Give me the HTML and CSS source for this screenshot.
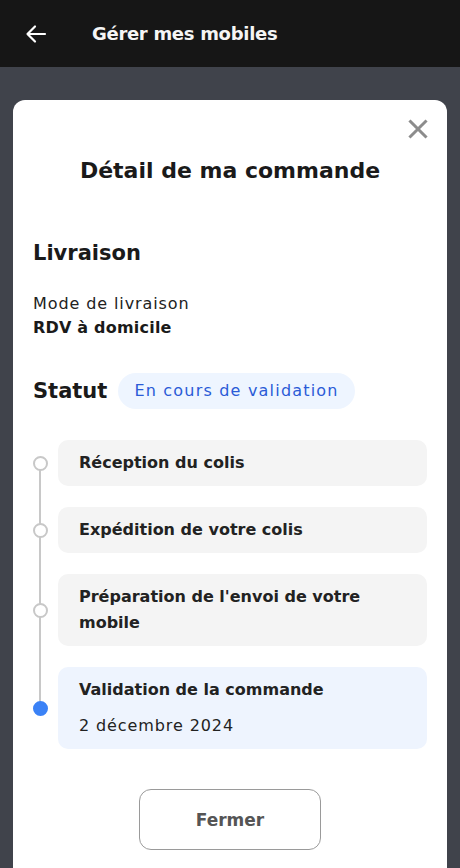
FILE: index.html
```html
<!DOCTYPE html>
<html lang="fr">
<head>
<meta charset="UTF-8" />
<meta name="viewport" content="width=device-width, initial-scale=1" />
<title>Gérer mes mobiles</title>
<link rel="stylesheet" href="styles.css">
</head>
<body>

<header class="topbar">
  <svg class="back" width="22" height="22" viewBox="0 0 22 22" fill="none" stroke="#fff" stroke-width="2.2" stroke-linecap="round" stroke-linejoin="round">
    <path d="M20 11H2.5M10 3.5L2.5 11l7.5 7.5"/>
  </svg>
  <div class="topbar-title">Gérer mes mobiles</div>
</header>

<main class="overlay">
  <div class="modal">
    <button class="close" title="Fermer">
      <svg width="20" height="20" viewBox="0 0 20 20" stroke="#8c8c8c" stroke-width="3" stroke-linecap="square">
        <path d="M2.5 2.5l15 15M17.5 2.5l-15 15"/>
      </svg>
    </button>

    <h1 class="modal-title">Détail de ma commande</h1>

    <h2 class="section-title">Livraison</h2>
    <div class="label">Mode de livraison</div>
    <div class="value">RDV à domicile</div>

    <div class="status-row">
      <h2 class="section-title">Statut</h2>
      <span class="pill">En cours de validation</span>
    </div>

    <div class="timeline">
      <div class="step">
        <span class="dot"></span>
        <div class="step-card">Réception du colis</div>
      </div>
      <div class="step">
        <span class="dot"></span>
        <div class="step-card">Expédition de votre colis</div>
      </div>
      <div class="step">
        <span class="dot"></span>
        <div class="step-card">Préparation de l'envoi de votre mobile</div>
      </div>
      <div class="step current">
        <span class="dot"></span>
        <div class="step-card">
          Validation de la commande
          <div class="step-date">2 décembre 2024</div>
        </div>
      </div>
    </div>

    <div class="actions">
      <button class="btn-close">Fermer</button>
    </div>
  </div>
</main>

</body>
</html>
```

FILE: styles.css
```css
* {
  box-sizing: border-box;
}
body, html {
  margin: 0; padding: 0;
  height: 100%;
  background: #40434b;
  font-family: 'DejaVu Sans', 'Open Sans', sans-serif;
  color: #1a1a1a;
  overflow: hidden;
}
.topbar {
  height: 67px;
  background: #161616;
  display: flex;
  align-items: center;
  padding-left: 25px;
}
.back {
  display: block;
}
.topbar-title {
  margin-left: 45px;
  color: #f5f5f5;
  font-size: 18px;
  font-weight: 700;
  letter-spacing: -0.3px;
}
.overlay {
  padding: 33px 13px 0;
}
.modal {
  position: relative;
  background: #fff;
  border-radius: 12px 12px 0 0;
  padding: 56px 20px 40px;
  min-height: 800px;
}
.close {
  position: absolute;
  top: 19px;
  right: 19px;
  background: none;
  border: 0;
  padding: 0;
  cursor: pointer;
}
.close svg {
  display: block;
}
.modal-title {
  margin: 0;
  text-align: center;
  font-size: 22px;
  line-height: 30px;
  font-weight: 700;
}
.section-title {
  margin: 52px 0 0;
  font-size: 21px;
  line-height: 30px;
  font-weight: 700;
}
.label {
  margin-top: 24px;
  font-size: 16px;
  line-height: 24px;
  letter-spacing: 0.9px;
  color: #222;
}
.value {
  font-size: 16px;
  line-height: 24px;
  font-weight: 700;
  letter-spacing: 0.2px;
}
.status-row {
  display: flex;
  align-items: center;
  gap: 11px;
  margin-top: 33px;
}
.status-row .section-title {
  margin: 0;
}
.pill {
  background: #eef5ff;
  color: #2a5bd7;
  font-size: 16px;
  letter-spacing: 1.2px;
  line-height: 36px;
  padding: 0 16px;
  border-radius: 18px;
}
.timeline {
  position: relative;
  margin-top: 31px;
  display: flex;
  flex-direction: column;
  gap: 21px;
}
.timeline::before {
  content: '';
  position: absolute;
  left: 6px;
  top: 23px;
  bottom: 42px;
  width: 2px;
  background: #c8c8c8;
}
.step {
  display: flex;
  align-items: center;
  gap: 10px;
}
.dot {
  position: relative;
  flex: none;
  width: 15px;
  height: 15px;
  border-radius: 50%;
  border: 2px solid #c8c8c8;
  background: #fff;
}
.step-card {
  flex: 1;
  background: #f4f4f4;
  border-radius: 10px;
  padding: 10px 21px;
  font-size: 16px;
  line-height: 26px;
  font-weight: 700;
  color: #222;
}
.step.current .dot {
  background: #3b82f6;
  border-color: #3b82f6;
}
.step.current .step-card {
  background: #eef4fe;
}
.step-date {
  margin-top: 10px;
  font-weight: 400;
  letter-spacing: 0.9px;
}
.actions {
  display: flex;
  justify-content: center;
  margin-top: 40px;
}
.btn-close {
  width: 182px;
  height: 61px;
  background: #fff;
  border: 1px solid #9a9a9a;
  border-radius: 12px;
  font-family: inherit;
  font-size: 17px;
  font-weight: 700;
  color: #555;
  cursor: pointer;
}
```
